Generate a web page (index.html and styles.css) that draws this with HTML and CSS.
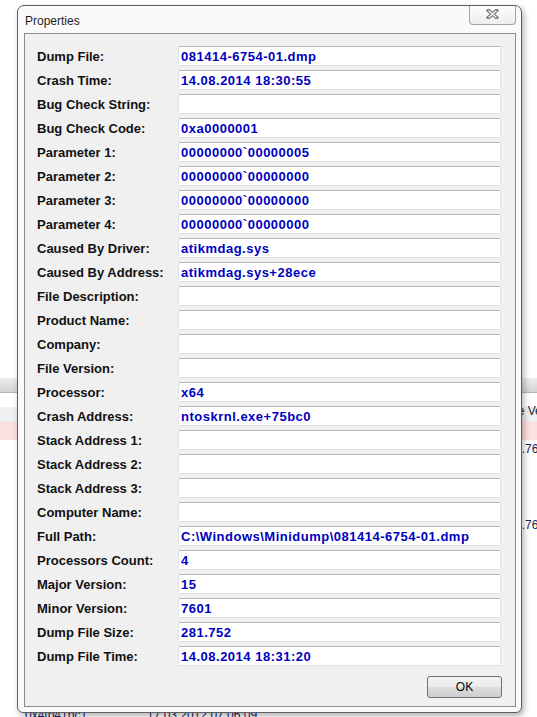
FILE: index.html
```html
<!DOCTYPE html>
<html lang="en">
<head>
    <meta charset="UTF-8">
    <meta name="viewport" content="width=device-width, initial-scale=1.0">
    <title>Properties</title>
    <link rel="stylesheet" href="styles.css">
</head>
<body>
    <!-- crash list of the main window, behind the dialog -->
    <div class="listview">
        <div class="lv-toolbar"></div>
        <div class="lv-header"><span class="lv-version">File Version</span></div>
        <div class="lv-row lv-row-marked"></div>
        <div class="lv-row"><span class="lv-version">6.1.7601.17514</span></div>
        <div class="lv-row"></div>
        <div class="lv-row"></div>
        <div class="lv-row"></div>
        <div class="lv-row"><span class="lv-version">6.1.7601.17514</span></div>
        <div class="lv-row"></div>
        <div class="lv-row"></div>
        <div class="lv-row"></div>
        <div class="lv-row"></div>
        <div class="lv-row"></div>
        <div class="lv-row"></div>
        <div class="lv-row"></div>
        <div class="lv-row"></div>
        <div class="lv-row"></div>
        <div class="lv-row">
            <span class="lv-addr">0x4fb41bc1</span>
            <span class="lv-date">17.03.2012 07:06:09</span>
        </div>
    </div>

    <div class="dialog">
        <div class="dialog-title">Properties</div>
        <button type="button" class="dialog-close" aria-label="Close">
            <svg width="13" height="10" viewBox="0 0 13 10">
                <path d="M2.5 1.5 L10.5 8.5 M10.5 1.5 L2.5 8.5" stroke="#767676" stroke-width="3.6" stroke-linecap="square" fill="none"/>
                <path d="M2.5 1.5 L10.5 8.5 M10.5 1.5 L2.5 8.5" stroke="#f2f2f2" stroke-width="1.4" stroke-linecap="butt" fill="none"/>
            </svg>
        </button>

        <div class="dialog-body">
            <div class="props">
                <label>Dump File:</label><div class="field">081414-6754-01.dmp</div>
                <label>Crash Time:</label><div class="field">14.08.2014 18:30:55</div>
                <label>Bug Check String:</label><div class="field"></div>
                <label>Bug Check Code:</label><div class="field">0xa0000001</div>
                <label>Parameter 1:</label><div class="field">00000000`00000005</div>
                <label>Parameter 2:</label><div class="field">00000000`00000000</div>
                <label>Parameter 3:</label><div class="field">00000000`00000000</div>
                <label>Parameter 4:</label><div class="field">00000000`00000000</div>
                <label>Caused By Driver:</label><div class="field">atikmdag.sys</div>
                <label>Caused By Address:</label><div class="field">atikmdag.sys+28ece</div>
                <label>File Description:</label><div class="field"></div>
                <label>Product Name:</label><div class="field"></div>
                <label>Company:</label><div class="field"></div>
                <label>File Version:</label><div class="field"></div>
                <label>Processor:</label><div class="field">x64</div>
                <label>Crash Address:</label><div class="field">ntoskrnl.exe+75bc0</div>
                <label>Stack Address 1:</label><div class="field"></div>
                <label>Stack Address 2:</label><div class="field"></div>
                <label>Stack Address 3:</label><div class="field"></div>
                <label>Computer Name:</label><div class="field"></div>
                <label>Full Path:</label><div class="field">C:\Windows\Minidump\081414-6754-01.dmp</div>
                <label>Processors Count:</label><div class="field">4</div>
                <label>Major Version:</label><div class="field">15</div>
                <label>Minor Version:</label><div class="field">7601</div>
                <label>Dump File Size:</label><div class="field">281.752</div>
                <label>Dump File Time:</label><div class="field">14.08.2014 18:31:20</div>
            </div>
            <div class="actions">
                <button type="button" class="btn-ok">OK</button>
            </div>
        </div>
    </div>
</body>
</html>
```

FILE: styles.css
```css
body {
    margin: 0;
    height: 717px;
    overflow: hidden;
    background-color: #fff;
    font-family: "Liberation Sans", Arial, sans-serif;
    color: #000;
}

/* list of the main window */
.listview {
    padding-top: 378px;
    font-size: 12px;
    color: #20205e;
    overflow: hidden;
}
.lv-toolbar {
    height: 14px;
    background: linear-gradient(#eeeeee, #d3d3d3);
    border-bottom: 1px solid #b5b5b5;
}
.lv-header {
    box-sizing: border-box;
    height: 28px;
    padding-top: 11px;
    line-height: 14px;
    color: #1e1e1e;
    background: linear-gradient(#fff 50%, #eff0f2 50%);
}
.lv-row {
    display: flex;
    height: 19px;
    line-height: 19px;
}
.lv-row-marked {
    background-color: #fbe2e2;
}
.lv-version {
    padding-left: 505px;
    white-space: nowrap;
}
.lv-addr {
    width: 122px;
    padding-left: 25px;
}
.lv-date {
    white-space: nowrap;
}

/* properties dialog */
.dialog {
    position: absolute;
    left: 17px;
    top: 5px;
    width: 505px;
    height: 708px;
    box-sizing: border-box;
    border: 1px solid #5e5e5e;
    border-radius: 7px 7px 6px 6px;
    background-color: #fafafa;
    box-shadow: 2px 3px 6px rgba(0, 0, 0, 0.3);
}
.dialog-title {
    height: 27px;
    box-sizing: border-box;
    padding: 3px 0 0 7px;
    line-height: 24px;
    font-size: 12px;
    color: #1f1f1f;
}
.dialog-close {
    position: absolute;
    top: 0;
    right: 5px;
    width: 47px;
    height: 19px;
    padding: 3px 0 0;
    display: flex;
    justify-content: center;
    align-items: flex-start;
    border: 1px solid #a3a3a3;
    border-top: none;
    border-radius: 0 0 4px 4px;
    background: linear-gradient(#fdfdfd, #ededed);
}
.dialog-body {
    margin: 0 5px 5px 6px;
    padding: 12px 14px 8px 12px;
    border: 1px solid #8d8d8d;
    background-color: #f0f0f0;
}
.props {
    display: grid;
    grid-template-columns: 141px 323px;
    grid-auto-rows: 20px;
    row-gap: 4px;
}
.props label {
    padding-top: 1px;
    font-size: 13px;
    font-weight: bold;
    line-height: 20px;
    color: #111;
    white-space: nowrap;
}
.field {
    box-sizing: border-box;
    height: 20px;
    padding: 1px 0 0 2px;
    border: 1px solid #dfe2e8;
    border-top-color: #b4b6bc;
    border-radius: 2px;
    background-color: #fff;
    font-size: 13px;
    font-weight: bold;
    line-height: 17px;
    letter-spacing: 0.5px;
    color: #0000bf;
    white-space: nowrap;
    overflow: hidden;
}
.actions {
    display: flex;
    justify-content: flex-end;
    margin-top: 10px;
    margin-right: -1px;
}
.btn-ok {
    width: 75px;
    height: 22px;
    padding: 0;
    border: 1px solid #707070;
    border-radius: 3px;
    background: linear-gradient(#f3f3f3 0%, #ebebeb 48%, #dddddd 52%, #cfcfcf 100%);
    font-family: "Liberation Sans", Arial, sans-serif;
    font-size: 12px;
    color: #000;
}
```
